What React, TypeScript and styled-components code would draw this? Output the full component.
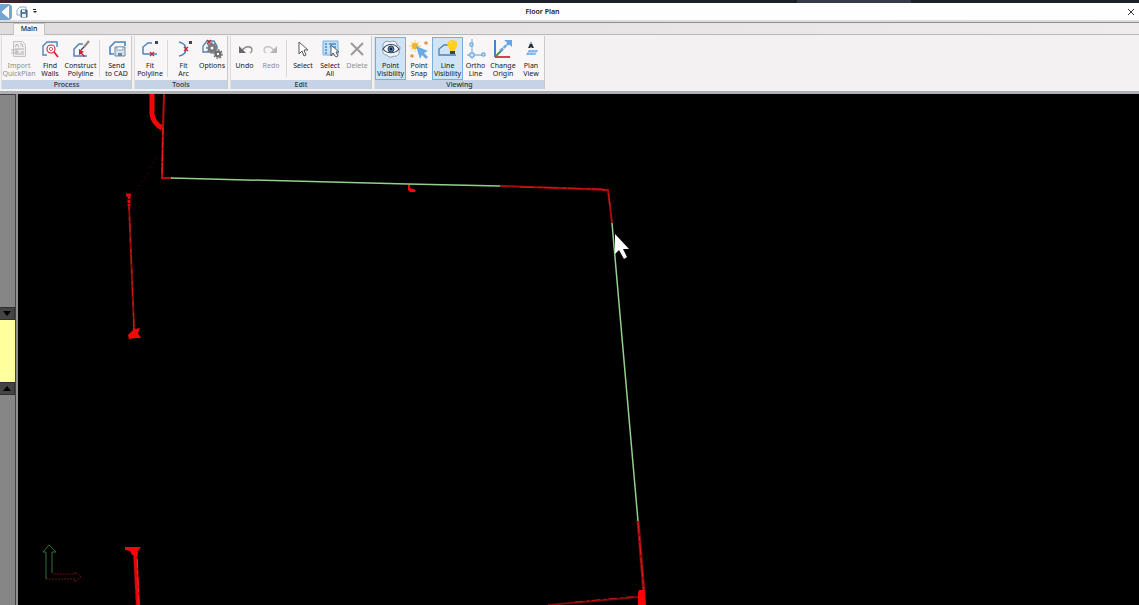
import React from "react";
import styled, { createGlobalStyle } from "styled-components";

const GlobalStyle = createGlobalStyle`
  * { box-sizing: border-box; }
  body { margin: 0; background: #000; overflow: hidden; font-family: "Noto Sans", "Open Sans", sans-serif; }
  button { font: inherit; color: inherit; padding: 0; margin: 0; border: 0; background: none; }
`;

const Page = styled.div`
  display: flex;
  flex-direction: column;
  height: 100vh;
  color: #16161c;
`;

const Backdrop = styled.div`
  height: 3px;
  background: linear-gradient(90deg, #4a2330 0, #1d2029 40px, #1d2029 70%, #343a49 70%, #343a49 80%, #1d2029 80%);
`;

const TitleBar = styled.header`
  display: grid;
  grid-template-columns: 1fr auto 1fr;
  align-items: center;
  height: 20px;
  padding-bottom: 2px;
  background: #fefefe;
  border-bottom: 1px solid #8e8e90;
  box-shadow: inset 0 -2px 0 #dcdcde;
`;

const QuickAccess = styled.div`
  display: flex;
  align-items: center;
  gap: 4px;
`;

const IconButton = styled.button`
  display: flex;
  align-items: center;
`;

const Title = styled.h1`
  margin: 0;
  font-size: 7px;
  line-height: 16px;
  font-weight: 600;
  padding-right: 54px;
`;

const CloseButton = styled(IconButton)`
  justify-self: end;
  padding-right: 4px;
`;

const TabStrip = styled.nav`
  display: flex;
  height: 12px;
  padding-left: 13px;
  background: linear-gradient(90deg, #dfddde, #e6e4e5 50%, #eeeced);
  border-bottom: 1px solid #b9b9bb;
`;

const Tab = styled.button`
  width: 32px;
  height: 12px;
  padding-bottom: 2px;
  font-size: 7px;
  line-height: 8px;
  font-weight: 500;
  background: #f8f6f7;
  border: 1px solid #c4c4c6;
  border-bottom: 0;
`;

const Ribbon = styled.div`
  display: flex;
  gap: 2px;
  height: 59px;
  padding: 1px 0 2px 1px;
  background: #f3f1f2;
  border-bottom: 3px solid #aeb0b3;
`;

const Group = styled.section`
  display: flex;
  flex-direction: column;
  background: #f8f6f7;
  border-right: 1px solid #c9c9cc;
  border-left: 1px solid #dededf;
`;

const GroupItems = styled.div`
  display: flex;
  flex: 1;
  padding-top: 1px;
`;

const GroupLabel = styled.h2`
  margin: 0;
  height: 9px;
  font-size: 7px;
  line-height: 9px;
  font-weight: 500;
  text-align: center;
  color: #2a3040;
  background: #c6d3e6;
`;

const Separator = styled.span`
  width: 1px;
  margin: 3px 2px;
  background: #d8d8da;
`;

const ToolButton = styled.button<{ $width: number; $active?: boolean }>`
  display: flex;
  flex-direction: column;
  align-items: center;
  width: ${(p) => p.$width}px;
  height: 43px;
  padding-top: 1px;
  font-size: 7px;
  line-height: 8px;
  font-weight: 400;
  white-space: nowrap;
  background: ${(p) => (p.$active ? "#cfe4f7" : "transparent")};
  box-shadow: ${(p) => (p.$active ? "inset 0 0 0 1px #78aede" : "none")};
  &:disabled { color: #8e8e90; }
  svg { flex: none; margin-bottom: 2px; }
  span { display: block; }
`;

const Workspace = styled.main`
  display: flex;
  flex: 1;
  min-height: 0;
`;

const SidePanel = styled.aside`
  display: flex;
  flex-direction: column;
  width: 18px;
  background: #868686;
  border-right: 2px solid #929292;
  box-shadow: inset -1px 0 0 #404040, inset 0 1px 0 #404040;
`;

const PanelTop = styled.div`
  height: 213px;
`;

const PanelToggle = styled.button`
  display: flex;
  align-items: center;
  justify-content: center;
  width: 15px;
  height: 13px;
  background: #444;
  border: 1px solid #303030;
  border-left: 0;
`;

const Note = styled.div`
  width: 15px;
  height: 62px;
  background: #ffff9c;
`;

const Canvas = styled.div`
  flex: 1;
  min-width: 0;
  overflow: hidden;
  background: #000;
`;

const Drawing = styled.svg`
  display: block;
  width: 100%;
  height: 100%;
`;

const BLUE = "#4d84bd";
const RED = "#d3202f";

const Icon = ({ children }: { children: React.ReactNode }) => (
  <svg width="24" height="22" viewBox="0 0 24 22" fill="none" strokeWidth="1.3" aria-hidden="true">
    {children}
  </svg>
);

const RedX = ({ x, y }: { x: number; y: number }) => (
  <path d={`M${x - 2} ${y - 2}l4 4m0-4l-4 4`} stroke={RED} strokeWidth="1.3" />
);

const icons: Record<string, React.ReactNode> = {
  importPlan: (
    <>
      <path d="M6.500 3.500h9l3 3v12h-12z" fill="#efefef" stroke="#c2c2c2" strokeWidth="1" />
      <path d="M8 9l2-3 2 3m1-3h2l1 3M8 11h9M8 14h4m2 0h3M8 16h9" stroke="#b0b0b0" strokeWidth="1" />
      <path d="M4 12h6v3H4" stroke="#b8b8b8" strokeWidth="1" />
    </>
  ),
  findWalls: (
    <>
      <path d="M9 17H5V8l4-4h10v5" stroke={BLUE} strokeWidth="1.4" />
      <circle cx="13" cy="11" r="4" stroke={RED} strokeWidth="1.1" fill="#fff" />
      <circle cx="13" cy="11" r="1.6" stroke="#e05a64" strokeWidth="1" />
      <path d="M16 14l4 5" stroke={RED} strokeWidth="1.8" />
    </>
  ),
  constructLine: (
    <>
      <path d="M18 18H5V11l5-5h4" stroke={BLUE} strokeWidth="1.5" />
      <path d="M20 3l-5 6" stroke="#8d8f84" strokeWidth="2.2" />
      <path d="M15 9l-3 3" stroke="#3c4248" strokeWidth="1.2" />
      <path d="M10 11v6l2-1 3 3 1-1-3-3 2-1z" fill={RED} />
    </>
  ),
  sendCad: (
    <>
      <path d="M9 16H5V9l5-5h10v4" stroke={BLUE} strokeWidth="1.6" />
      <path d="M10 9h10v9H10z" fill="#d5e2ef" stroke="#71879d" strokeWidth="1" />
      <path d="M12 9h6v3h-6z" fill="#fff" stroke="#71879d" strokeWidth=".7" />
      <path d="M13 15h4v3h-4z" fill="#71879d" />
    </>
  ),
  fitPolyline: (
    <>
      <path d="M5 16V9l5-4h4M5 16h14" stroke={BLUE} strokeWidth="1.5" />
      <path d="M17 3h3v3h-3z" fill="#3c4550" />
      <RedX x={14} y={16} />
    </>
  ),
  fitArc: (
    <>
      <path d="M7 4c4 1 7 3 7 7s-2 6-7 7" stroke={BLUE} strokeWidth="1.5" />
      <path d="M17 3h3v3h-3z" fill="#3c4550" />
      <RedX x={14} y={11} />
    </>
  ),
  options: (
    <>
      <path d="M3 14V8l4-5h7l3 5-4 6z" stroke={BLUE} strokeWidth="1.3" />
      <RedX x={9} y={4} />
      <circle cx="12" cy="10" r="3" stroke="#77797c" strokeWidth="3" />
      <circle cx="12" cy="10" r="5" stroke="#77797c" strokeWidth="1.5" strokeDasharray="2 1.6" />
      <circle cx="18" cy="16" r="2.4" stroke="#6b6d70" strokeWidth="2.4" />
      <circle cx="18" cy="16" r="4.2" stroke="#6b6d70" strokeWidth="1.3" strokeDasharray="1.7 1.5" />
    </>
  ),
  undo: (
    <>
      <path d="M9 13c3-6 10-5 10-1 0 1 0 2-2 3" stroke="#85878a" strokeWidth="1.3" />
      <path d="M6 8v7h7z" fill="#66686b" />
    </>
  ),
  redo: (
    <>
      <path d="M15 13c-3-6-10-5-10-1 0 1 0 2 2 3" stroke="#c5c5c7" strokeWidth="1.3" />
      <path d="M18 8v7h-7z" fill="#b5b5b7" />
    </>
  ),
  select: <path d="M8 4v12l3-3 2 5 2-1-2-5h4z" fill="#fff" stroke="#55575a" strokeWidth="1" />,
  selectAll: (
    <>
      <path d="M5 3h15v14H5z" fill="#c5e1f5" stroke="#6fb0e4" strokeWidth="1" />
      <path d="M7 6h2m2 0h7M7 9h2M7 12h2M7 15h2m3-6h6" stroke="#4388c2" strokeWidth="1.3" />
      <path d="M13 7v11l2-3 3 4 2-1-2-4h3z" fill="#fff" stroke="#55575a" strokeWidth="1" />
    </>
  ),
  remove: <path d="M6 5l12 12m0-12L6 17" stroke="#9a9a9a" strokeWidth="2" />,
  pointVisibility: (
    <>
      <path d="M4 9c-1-5 4-7 7-5 4-2 7 0 7 3 4 1 3 4 2 6 1 4-3 6-5 5-3 2-6 1-7-1-4 0-5-3-4-8z" fill="#eef4fa" stroke="#8d98a4" strokeWidth="1" />
      <path d="M4 11c4-6 12-6 16 0-4 5-12 5-16 0z" fill="#fff" stroke="#33485e" strokeWidth="1.2" />
      <circle cx="12" cy="11" r="3" fill="#4b80b4" stroke="#24394e" strokeWidth="1" />
      <circle cx="12" cy="11" r="1.2" fill="#122" />
    </>
  ),
  pointSnap: (
    <>
      <path d="M8 2v12M2 8h12M4 4l8 8m0-8l-8 8" stroke="#f9dc90" />
      <circle cx="8" cy="8" r="3.2" fill="#f4b42b" />
      <circle cx="19" cy="5" r="1.8" fill="#dc9c38" />
      <circle cx="5" cy="18" r="1.8" fill="#dc9c38" />
      <path d="M9 8l12 5-4 2 4 4-2 2-4-4-2 4z" fill="#67aae8" />
    </>
  ),
  lineVisibility: (
    <>
      <path d="M20 17H3v-6l5-4h5" stroke="#557fa8" strokeWidth="1.3" />
      <path d="M16 2c-5 0-6 5-3 8l1 3h5l1-3c3-4 1-8-4-8z" fill="#ffd01c" />
      <path d="M14 5l1-1" stroke="#fff6b0" />
      <path d="M14 13h5v3h-5z" fill="#3c4248" />
    </>
  ),
  ortho: (
    <>
      <path d="M8 1v20M3 17h18" stroke="#8bbce9" strokeWidth="1.3" />
      <path d="M6 5h3v3H6zM6 15h4v4H6zM18 15h3v3h-3z" fill="#d7eafb" stroke="#5c9ddc" strokeWidth="1" />
    </>
  ),
  origin: (
    <>
      <path d="M4 2v17" stroke="#3377c4" strokeWidth="1.8" />
      <path d="M4 19h15" stroke="#cc3040" strokeWidth="1.8" />
      <path d="M5 18l7-7" stroke="#449448" strokeWidth="1.8" />
      <path d="M9 13L18 5" stroke="#65a6e4" strokeWidth="2.4" strokeDasharray="4 .7" />
      <path d="M13 2h8v7z" fill="#65a6e4" />
    </>
  ),
  plan: (
    <>
      <path d="M10 12h9l-3 5H7z" fill="#70afe9" />
      <path d="M13 12l-3 5m6-5l-2 5M8 14.500h10" stroke="#bfdcf6" strokeWidth=".8" />
      <path d="M12 3l-2 4h4z" fill="#76aee2" />
      <path d="M9 10l2-4h2l2 4h-2l-1-1-1 1z" fill="#252b33" />
    </>
  ),
};

type Tool = { label: string[]; icon: string; width: number; disabled?: boolean; active?: boolean } | "separator";

const groups: { name: string; tools: Tool[] }[] = [
  {
    name: "Process",
    tools: [
      { label: ["Import", "QuickPlan"], icon: "importPlan", width: 34, disabled: true },
      { label: ["Find", "Walls"], icon: "findWalls", width: 28 },
      { label: ["Construct", "Polyline"], icon: "constructLine", width: 33 },
      "separator",
      { label: ["Send", "to CAD"], icon: "sendCad", width: 29 },
    ],
  },
  {
    name: "Tools",
    tools: [
      { label: ["Fit", "Polyline"], icon: "fitPolyline", width: 30 },
      "separator",
      { label: ["Fit", "Arc"], icon: "fitArc", width: 27 },
      { label: ["Options"], icon: "options", width: 30 },
    ],
  },
  {
    name: "Edit",
    tools: [
      { label: ["Undo"], icon: "undo", width: 27 },
      { label: ["Redo"], icon: "redo", width: 26, disabled: true },
      "separator",
      { label: ["Select"], icon: "select", width: 28 },
      { label: ["Select", "All"], icon: "selectAll", width: 26 },
      { label: ["Delete"], icon: "remove", width: 28, disabled: true },
    ],
  },
  {
    name: "Viewing",
    tools: [
      { label: ["Point", "Visibility"], icon: "pointVisibility", width: 31, active: true },
      { label: ["Point", "Snap"], icon: "pointSnap", width: 26 },
      { label: ["Line", "Visibility"], icon: "lineVisibility", width: 31, active: true },
      { label: ["Ortho", "Line"], icon: "ortho", width: 25 },
      { label: ["Change", "Origin"], icon: "origin", width: 30 },
      { label: ["Plan", "View"], icon: "plan", width: 26 },
    ],
  },
];

const FloorPlan = () => (
  <Drawing fill="none" aria-label="Floor plan point cloud">
    <g transform="translate(-18 -94)">
      <g stroke="#e00808">
        <path d="M152 94v20q1 9 10 14" stroke="#f40606" strokeWidth="5" />
        <path d="M164 94l-1 34-1 50h10" stroke="#b80c0c" strokeWidth="2" />
        <path d="M163 128l-1 48" stroke="#ff2020" strokeWidth="1" strokeDasharray="7 2 3 1" />
        <path d="M158 95v22" stroke="#5c0808" strokeWidth="1" strokeDasharray="1 5" />
        <path d="M156 158l-6 10m-2 5l-13 18" stroke="#6c0c0c" strokeWidth="1" strokeDasharray="1 4" />
        <path d="M126 195h5m-2-1v12" strokeWidth="3" strokeDasharray="5 1 3 1" />
        <path d="M129 205l5 122" stroke="#8c0c0c" strokeWidth="2" />
        <path d="M129 205l5 122" stroke="#d81818" strokeWidth="1" strokeDasharray="5 7 4 2 9 5" />
        <path d="M500 186l60 2 48 2 4 33" stroke="#a80c0c" strokeWidth="2" />
        <path d="M520 187l82 2 6 2 2 14" stroke="#e01414" strokeWidth="1" strokeDasharray="14 5 3 2" />
        <path d="M638 521l6 72" stroke="#900c0c" strokeWidth="3" />
        <path d="M638 521l6 72" stroke="#d82020" strokeWidth="1" strokeDasharray="12 3 5 2" />
        <path d="M548 605l91-8" stroke="#800a0a" strokeWidth="2" />
        <path d="M575 602l64-6" stroke="#c01414" strokeWidth="1" strokeDasharray="8 4 2 3" />
        <path d="M135 550l3 55" strokeWidth="4" />
        <path d="M134 568l2 37" stroke="#7c0808" strokeWidth="1" strokeDasharray="3 4" />
        <path d="M137 552l2 53" stroke="#ff2424" strokeWidth="1" strokeDasharray="4 3 9 2" />
      </g>
      <g fill="#f80606">
        <path d="M133 325l2 4 5-1-2 5 3 5-5 0-7 1-1-4 5-5z" />
        <path d="M408 184h2v4l6 2-1 2h-5l-2-2z" />
        <path d="M125 547h12l4 0-3 4-1 4h-5l-2-4-5-1z" />
        <path d="M639 590h5l1 2 1 13h-8v-12z" />
      </g>
      <g stroke="#93cf8e" strokeWidth="1.500">
        <path d="M171 178l237 6 92 2M612 223l26 298" />
      </g>
      <path d="M46 579v-27h-3l6-7 7 7h-4v21" stroke="#347034" />
      <path d="M46 579h29v3l6-5-6-5v2H52" stroke="#701010" strokeDasharray="2 1" />
      <path d="M615 234v20l4-4 5 9 3-2-4-8h6z" fill="#fff" />
    </g>
  </Drawing>
);

export default function App() {
  return (
    <Page>
      <GlobalStyle />
      <Backdrop />
      <TitleBar>
        <QuickAccess>
          <IconButton aria-label="Application menu">
            <svg width="12" height="16" viewBox="0 0 12 16">
              <path d="M0 0h8q4 0 4 4v8q0 4-4 4H0z" fill="#72a5d2" />
              <path d="M9 2L2 8l7 6" fill="#fff" stroke="#fff" strokeWidth="1" />
            </svg>
          </IconButton>
          <IconButton aria-label="Save">
            <svg width="12" height="12" viewBox="0 0 12 12" fill="none">
              <path d="M4 9H1V4l3-3h6v2" stroke="#8eabc8" />
              <path d="M5 4h6v7H5z" fill="#5d80a5" stroke="#345777" />
              <path d="M6 4h3v2H6zM6 8h4v3H6z" fill="#e9f1f8" />
            </svg>
          </IconButton>
          <IconButton aria-label="Customize quick access toolbar">
            <svg width="6" height="6" viewBox="0 0 6 6">
              <path d="M1 0h3v1H1zM1 2h4L3 4z" fill="#222" />
            </svg>
          </IconButton>
        </QuickAccess>
        <Title>Floor Plan</Title>
        <CloseButton aria-label="Close">
          <svg width="8" height="8" viewBox="0 0 8 8">
            <path d="M1 1l6 6m0-6L1 7" stroke="#333" strokeWidth="1" />
          </svg>
        </CloseButton>
      </TitleBar>
      <TabStrip>
        <Tab>Main</Tab>
      </TabStrip>
      <Ribbon>
        {groups.map((group) => (
          <Group key={group.name}>
            <GroupItems>
              {group.tools.map((tool, i) =>
                tool === "separator" ? (
                  <Separator key={i} />
                ) : (
                  <ToolButton key={i} $width={tool.width} $active={tool.active} disabled={tool.disabled}>
                    <Icon>{icons[tool.icon]}</Icon>
                    {tool.label.map((line) => (
                      <span key={line}>{line}</span>
                    ))}
                  </ToolButton>
                )
              )}
            </GroupItems>
            <GroupLabel>{group.name}</GroupLabel>
          </Group>
        ))}
      </Ribbon>
      <Workspace>
        <SidePanel>
          <PanelTop />
          <PanelToggle aria-label="Collapse down">
            <svg width="8" height="6" viewBox="0 0 8 6"><path d="M0 0h8L4 5z" /></svg>
          </PanelToggle>
          <Note />
          <PanelToggle aria-label="Collapse up">
            <svg width="8" height="6" viewBox="0 0 8 6"><path d="M0 5h8L4 0z" /></svg>
          </PanelToggle>
        </SidePanel>
        <Canvas>
          <FloorPlan />
        </Canvas>
      </Workspace>
    </Page>
  );
}
